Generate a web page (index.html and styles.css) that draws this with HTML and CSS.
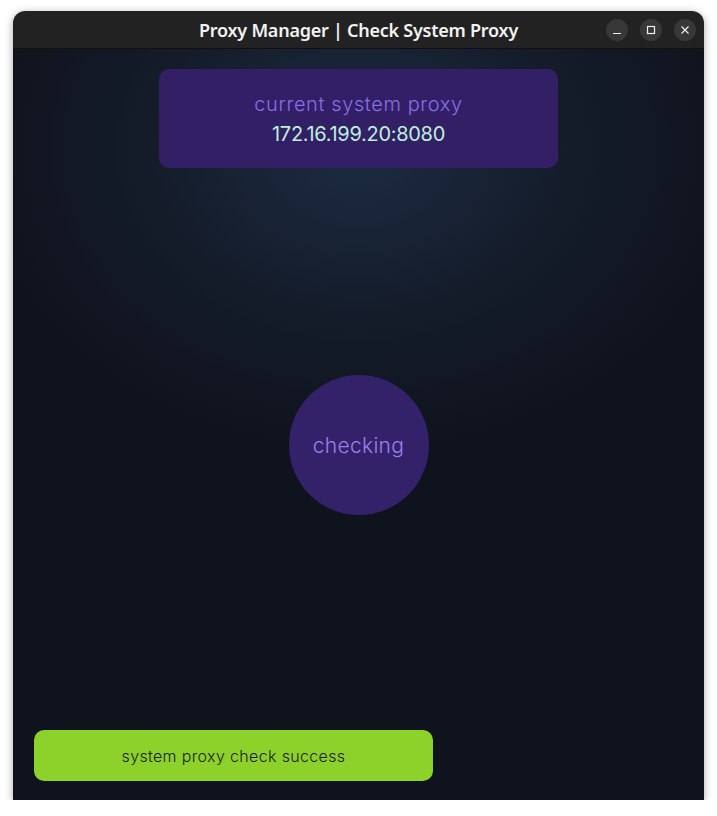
FILE: index.html
```html
<!DOCTYPE html>
<html lang="en">
<head>
    <meta charset="UTF-8">
    <title>Proxy Manager | Check System Proxy</title>
    <meta name="viewport" content="width=device-width, initial-scale=1">
    <link rel="stylesheet" href="styles.css">
</head>
<body>
    <div class="window">
        <div class="titlebar">
            <span class="title">Proxy Manager | Check System Proxy</span>
            <div class="controls">
                <span class="ctrl">
                    <svg width="10" height="10" viewBox="0 0 10 10"><path d="M1 8.5h8" stroke="#eee" stroke-width="1.2"/></svg>
                </span>
                <span class="ctrl">
                    <svg width="10" height="10" viewBox="0 0 10 10"><rect x="1.5" y="1.5" width="7" height="7" fill="none" stroke="#eee" stroke-width="1.2"/></svg>
                </span>
                <span class="ctrl">
                    <svg width="10" height="10" viewBox="0 0 10 10"><path d="M1.5 1.5l7 7M8.5 1.5l-7 7" stroke="#eee" stroke-width="1.2"/></svg>
                </span>
            </div>
        </div>
        <div class="content">
            <div class="proxy-card">
                <div class="proxy-label">current system proxy</div>
                <div class="proxy-value">172.16.199.20:8080</div>
            </div>
            <div class="status-circle">checking</div>
            <div class="toast">system proxy check success</div>
        </div>
    </div>
</body>
</html>
```

FILE: styles.css
```css
body {
    margin: 0;
    background: #ffffff;
    font-family: 'Inter', 'Noto Sans', sans-serif;
}
.window {
    margin: 11px 0 0 13px;
    width: 691px;
    height: 789px;
    display: flex;
    flex-direction: column;
    border-radius: 12px 12px 0 0;
    overflow: hidden;
    box-shadow: 0 2px 8px rgba(0, 0, 0, 0.35);
}
.titlebar {
    height: 37px;
    background: #222222;
    border-bottom: 1px solid #111;
    display: flex;
    align-items: center;
    justify-content: center;
    position: relative;
}
.title {
    color: #f2f2f2;
    font-family: 'Noto Sans', sans-serif;
    font-weight: 600;
    font-size: 18px;
    letter-spacing: -0.25px;
}
.controls {
    position: absolute;
    right: 8px;
    top: 8px;
    display: flex;
    gap: 12px;
}
.ctrl {
    width: 22px;
    height: 22px;
    border-radius: 50%;
    background: #383838;
    display: flex;
    align-items: center;
    justify-content: center;
}
.content {
    flex: 1;
    display: flex;
    flex-direction: column;
    align-items: center;
    background: radial-gradient(ellipse 380px 300px at 346px 100px, #1c2b42 0%, #141c2a 55%, #0f131d 100%);
    background-color: #0f131d;
}
.proxy-card {
    margin-top: 20px;
    width: 399px;
    height: 99px;
    box-sizing: border-box;
    border-radius: 10px;
    background: #321f66;
    display: flex;
    flex-direction: column;
    align-items: center;
    justify-content: center;
    gap: 6px;
}
.proxy-label {
    color: #8570e6;
    font-weight: 300;
    font-size: 20px;
    line-height: 24px;
    letter-spacing: 0.6px;
}
.proxy-value {
    color: #bdf0da;
    font-weight: 400;
    font-size: 20px;
    line-height: 24px;
    letter-spacing: -0.3px;
}
.status-circle {
    margin-top: 207px;
    width: 140px;
    height: 140px;
    border-radius: 50%;
    background: #33216a;
    color: #9b80ea;
    font-weight: 300;
    font-size: 21px;
    letter-spacing: 0.3px;
    display: flex;
    align-items: center;
    justify-content: center;
}
.toast {
    margin-top: auto;
    margin-bottom: 19px;
    align-self: flex-start;
    margin-left: 21px;
    width: 399px;
    height: 51px;
    border-radius: 10px;
    background: #8dd12b;
    color: #1c1c1c;
    font-size: 16px;
    font-weight: 300;
    letter-spacing: 0.35px;
    display: flex;
    align-items: center;
    justify-content: center;
}
```
